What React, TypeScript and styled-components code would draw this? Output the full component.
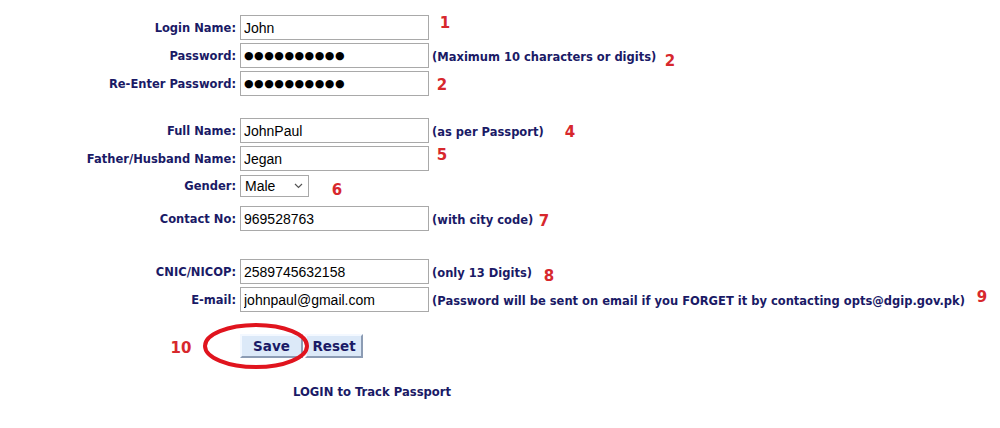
import React from "react";
import styled, { createGlobalStyle } from "styled-components";

const GlobalStyle = createGlobalStyle`
    body {
        margin: 0;
        background: #ffffff;
    }
`;

const colors = {
    navy: "#1a1a66",
    red: "#d7282d",
    inputBorder: "#a9a9a9",
    buttonBg: "#dce9f8",
};

const Page = styled.div`
    position: relative;
    width: 1000px;
    height: 428px;
    padding-top: 15px;
    box-sizing: border-box;
    font-family: "DejaVu Sans", Verdana, sans-serif;
    overflow: hidden;
`;

const Form = styled.div`
    display: flex;
    flex-direction: column;
`;

const Row = styled.div<{ $gap: number }>`
    display: grid;
    grid-template-columns: 236px auto;
    column-gap: 4px;
    align-items: center;
    margin-top: ${({ $gap }) => $gap}px;
`;

const Label = styled.label`
    text-align: right;
    font-size: 11.5px;
    font-weight: 700;
    color: ${colors.navy};
    white-space: nowrap;
`;

const Field = styled.div`
    display: flex;
    align-items: center;
    gap: 3px;
`;

const Input = styled.input<{ $dots?: boolean }>`
    width: 189px;
    height: 25px;
    box-sizing: border-box;
    margin: 0;
    padding: 0 3px;
    border: 1px solid ${colors.inputBorder};
    font-family: ${({ $dots }) =>
        $dots ? `"DejaVu Sans", sans-serif` : `"Liberation Sans", Arial, sans-serif`};
    font-size: ${({ $dots }) => ($dots ? "11px" : "14px")};
    letter-spacing: ${({ $dots }) => ($dots ? "0.5px" : "0")};
    color: #000;
    outline: none;
    background: #fff;
`;

const SelectBox = styled.div`
    width: 69px;
    height: 22px;
    box-sizing: border-box;
    border: 1px solid ${colors.inputBorder};
    display: flex;
    align-items: center;
    justify-content: space-between;
    padding: 0 5px 0 4px;
    font-family: "Liberation Sans", Arial, sans-serif;
    font-size: 14px;
    color: #000;
    background: #fff;
`;

const Hint = styled.span`
    font-size: 11.5px;
    font-weight: 700;
    color: ${colors.navy};
    white-space: nowrap;
    padding-top: 2px;
`;

const Buttons = styled.div`
    display: flex;
    gap: 2px;
    margin: 22px 0 0 240px;
`;

const Button = styled.button<{ $width: number }>`
    width: ${({ $width }) => $width}px;
    height: 24px;
    margin: 0;
    padding: 0;
    background: ${colors.buttonBg};
    border: 2px solid;
    border-color: #f3f8ff #8c9cb4 #8c9cb4 #f3f8ff;
    font-family: "DejaVu Sans", Verdana, sans-serif;
    font-size: 13.5px;
    font-weight: 700;
    color: ${colors.navy};
`;

const TrackLink = styled.div`
    margin: 27px 0 0 293px;
    font-size: 11.6px;
    font-weight: 700;
    color: ${colors.navy};
`;

const Marker = styled.span<{ $x: number; $y: number }>`
    position: absolute;
    left: ${({ $x }) => $x}px;
    top: ${({ $y }) => $y}px;
    transform: translate(-50%, -50%);
    font-family: "DejaVu Sans", Verdana, sans-serif;
    font-size: 15px;
    font-weight: 700;
    line-height: 1;
    color: ${colors.red};
`;

const Circle = styled.svg`
    position: absolute;
    left: 200px;
    top: 320px;
    pointer-events: none;
`;

const Chevron = () => (
    <svg width="9" height="6" viewBox="0 0 9 6">
        <path d="M1 1l3.5 3.5L8 1" fill="none" stroke="#555" strokeWidth="1.2" />
    </svg>
);

const dots = "●●●●●●●●●●";

type FormRow = {
    key: string;
    label: string;
    gap: number;
    value?: string;
    hint?: string;
    dots?: boolean;
    select?: boolean;
};

const rows: FormRow[] = [
    { key: "login", label: "Login Name:", gap: 0, value: "John" },
    {
        key: "pwd",
        label: "Password:",
        gap: 3,
        value: dots,
        dots: true,
        hint: "(Maximum 10 characters or digits)",
    },
    { key: "repwd", label: "Re-Enter Password:", gap: 3, value: dots, dots: true },
    { key: "full", label: "Full Name:", gap: 22, value: "JohnPaul", hint: "(as per Passport)" },
    { key: "father", label: "Father/Husband Name:", gap: 3, value: "Jegan" },
    { key: "gender", label: "Gender:", gap: 4, select: true },
    { key: "contact", label: "Contact No:", gap: 9, value: "969528763", hint: "(with city code)" },
    { key: "cnic", label: "CNIC/NICOP:", gap: 28, value: "2589745632158", hint: "(only 13 Digits)" },
    {
        key: "email",
        label: "E-mail:",
        gap: 3,
        value: "johnpaul@gmail.com",
        hint: "(Password will be sent on email if you FORGET it by contacting opts@dgip.gov.pk)",
    },
];

const markers = [
    { key: "m1", text: "1", x: 445, y: 23 },
    { key: "m2a", text: "2", x: 670, y: 61 },
    { key: "m2b", text: "2", x: 442, y: 85 },
    { key: "m4", text: "4", x: 570, y: 132 },
    { key: "m5", text: "5", x: 442, y: 155 },
    { key: "m6", text: "6", x: 337, y: 190 },
    { key: "m7", text: "7", x: 544, y: 221 },
    { key: "m8", text: "8", x: 549, y: 276 },
    { key: "m9", text: "9", x: 982, y: 297 },
    { key: "m10", text: "10", x: 181, y: 348 },
];

const App = () => {
    return (
        <Page>
            <GlobalStyle />
            <Form>
                {rows.map((row) => (
                    <Row key={row.key} $gap={row.gap}>
                        <Label>{row.label}</Label>
                        <Field>
                            {row.select ? (
                                <SelectBox>
                                    Male
                                    <Chevron />
                                </SelectBox>
                            ) : (
                                <Input readOnly defaultValue={row.value} $dots={row.dots} />
                            )}
                            {row.hint && <Hint>{row.hint}</Hint>}
                        </Field>
                    </Row>
                ))}
                <Buttons>
                    <Button $width={63}>Save</Button>
                    <Button $width={58}>Reset</Button>
                </Buttons>
                <TrackLink>LOGIN to Track Passport</TrackLink>
            </Form>
            {markers.map((m) => (
                <Marker key={m.key} $x={m.x} $y={m.y}>
                    {m.text}
                </Marker>
            ))}
            <Circle width="112" height="52" viewBox="0 0 112 52">
                <ellipse cx="56" cy="26" rx="51" ry="21" fill="none" stroke="#e0141e" strokeWidth="4" />
            </Circle>
        </Page>
    );
};

export default App;
